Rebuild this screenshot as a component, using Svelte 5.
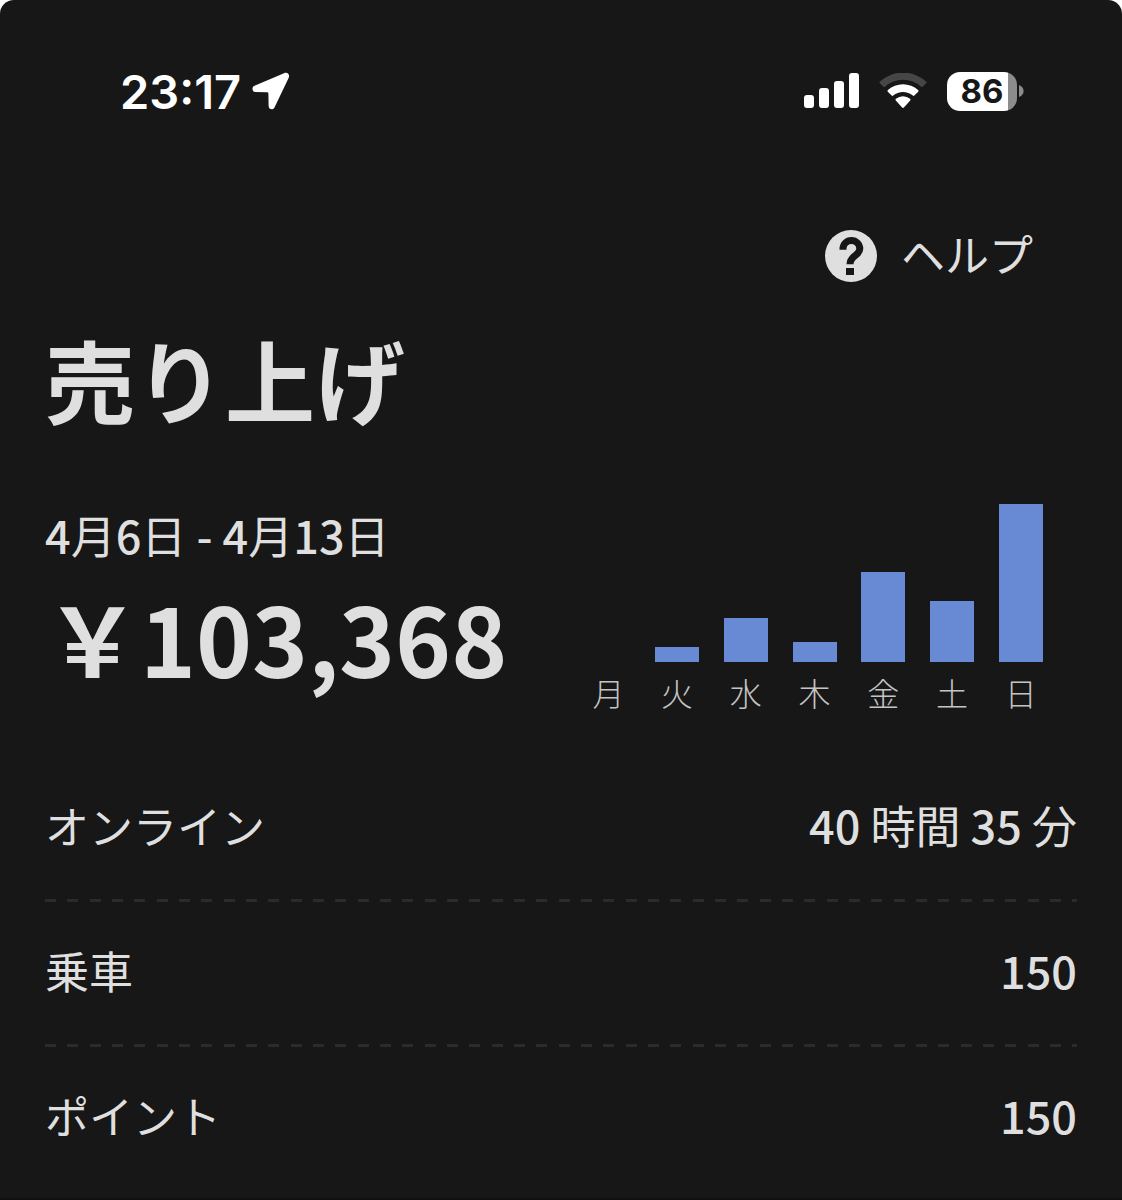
<script lang="ts">
  const days = [
    { label: '月', value: 0 },
    { label: '火', value: 15 },
    { label: '水', value: 44 },
    { label: '木', value: 20 },
    { label: '金', value: 90 },
    { label: '土', value: 61 },
    { label: '日', value: 158 }
  ];

  const stats = [
    { label: 'オンライン', value: '40 時間 35 分' },
    { label: '乗車', value: '150' },
    { label: 'ポイント', value: '150' }
  ];

  const period = '4月6日 - 4月13日';
  const max = Math.max(...days.map((d) => d.value));

  // digits are set heavier than the kanji around them
  function split(text: string): string[] {
    return text.split(/([\d-]+)/).filter(Boolean);
  }
</script>

{#snippet mixed(text: string)}
  {#each split(text) as part}<span class:num={/[\d-]/.test(part)}>{part}</span>{/each}
{/snippet}

<div class="screen">
  <header class="status-bar">
    <div class="clock">
      <span>23:17</span>
      <svg width="38" height="38" viewBox="0 0 38 38" aria-hidden="true">
        <path d="M32 1.2 2.5 13.8C-.6 15.2 0 20 3.2 20L15 20.2Q16.4 20.2 16.4 21.6L16.6 33.8C16.7 38 21.2 38.4 22.6 35.3L36.6 6C38.2 2.6 35.6-.4 32 1.2Z" fill="#fff" />
      </svg>
    </div>
    <div class="indicators">
      <svg width="55" height="36" viewBox="0 0 55 36" fill="#fff" aria-hidden="true">
        <rect x="0" y="22" width="10" height="13" rx="3" />
        <rect x="15" y="15" width="10" height="20" rx="3" />
        <rect x="30" y="8" width="10" height="27" rx="3" />
        <rect x="45" y="0" width="10" height="35" rx="3" />
      </svg>
      <svg width="48" height="36" viewBox="0 0 48 36" aria-hidden="true">
        <path d="M.8 10.2Q0 9.4.9 8.6A34 34 0 0 1 47.1 8.6Q48 9.4 47.2 10.2L43.6 13.7Q42.8 14.4 42 13.7A27 27 0 0 0 6 13.7Q5.2 14.4 4.4 13.7Z" fill="#464646" />
        <path d="M8.8 18.7Q8 17.9 8.9 17.1A22.5 22.5 0 0 1 39.1 17.1Q40 17.9 39.2 18.7L35.4 22.6Q34.6 23.3 33.8 22.6A15.2 15.2 0 0 0 14.2 22.6Q13.4 23.3 12.6 22.6Z" fill="#fff" />
        <path d="M16.8 27.4Q16 26.6 16.9 25.8A11.2 11.2 0 0 1 31.1 25.8Q32 26.6 31.2 27.4L24.9 34.5Q24 35.4 23.1 34.5Z" fill="#fff" />
      </svg>
      <div class="battery">
        <span class="level">86</span>
        <svg width="5" height="12" viewBox="0 0 5 12" aria-hidden="true">
          <path d="M0 0Q4.6 2 4.6 6T0 12Z" fill="#8c8c8c" />
        </svg>
      </div>
    </div>
  </header>

  <nav class="toolbar">
    <button type="button" class="help">
      <svg width="52" height="52" viewBox="0 0 52 52" aria-hidden="true">
        <circle cx="26" cy="26" r="26" fill="#dfdfdf" />
        <path d="M18 19.8V18.8A8.3 8.3 0 0 1 34.8 18.8C34.8 26 25 25.2 25 34.2" fill="none" stroke="#171717" stroke-width="7" />
        <rect x="21" y="38" width="8" height="7" fill="#171717" />
      </svg>
      <span>ヘルプ</span>
    </button>
  </nav>

  <main>
    <h1>売り上げ</h1>

    <section class="summary">
      <div class="total">
        <p class="period">{@render mixed(period)}</p>
        <p class="amount">￥103,368</p>
      </div>
      <div class="chart">
        {#each days as day}
          <div class="day">
            <div class="track">
              <div class="bar" style="height: {(day.value / max) * 100}%"></div>
            </div>
            <span>{day.label}</span>
          </div>
        {/each}
      </div>
    </section>

    <dl class="stats">
      {#each stats as stat}
        <div class="stat">
          <dt>{stat.label}</dt>
          <dd>{@render mixed(stat.value)}</dd>
        </div>
      {/each}
    </dl>
  </main>
</div>

<style>
  :global(body) {
    background: #fff;
  }

  .screen {
    box-sizing: border-box;
    min-height: 100vh;
    padding: 0 45px;
    border-bottom: 2px solid #110f10;
    border-radius: 14px 14px 0 0;
    background: #171717;
    color: #dfdfdf;
    font-family: 'Noto Sans CJK JP', sans-serif;
  }

  .status-bar {
    display: flex;
    align-items: center;
    justify-content: space-between;
    height: 182px;
    padding: 0 53px 0 75px;
    color: #fff;
    font-family: Inter, sans-serif;
  }

  .clock {
    display: flex;
    align-items: center;
    gap: 11px;
    font-size: 47px;
    font-weight: 600;
  }

  .indicators {
    display: flex;
    align-items: center;
    gap: 20px;
  }

  .battery {
    display: flex;
    align-items: center;
    gap: 2px;
  }

  .level {
    width: 70px;
    border-radius: 13px;
    background: linear-gradient(90deg, #fff 87%, #8c8c8c 87%);
    color: #171717;
    font-size: 33px;
    font-weight: 700;
    line-height: 39px;
    text-align: center;
  }

  .toolbar {
    display: flex;
    align-items: center;
    justify-content: flex-end;
    height: 148px;
    padding-right: 44px;
  }

  .help {
    display: flex;
    align-items: center;
    gap: 24px;
    padding: 0;
    border: none;
    background: none;
    color: inherit;
    font-family: inherit;
    font-size: 44px;
    line-height: 64px;
    cursor: pointer;
  }

  .help span {
    padding-bottom: 6px;
  }

  h1 {
    margin: 0;
    font-size: 90px;
    font-weight: 700;
    line-height: 96px;
  }

  .summary {
    display: grid;
    grid-template-columns: 11fr 10fr;
    padding: 78px 22px 43px 0;
  }

  .period {
    margin: 0;
    font-size: 45px;
    line-height: 62px;
  }

  .num {
    font-weight: 500;
  }

  .amount {
    margin: 0;
    font-size: 95px;
    font-weight: 700;
    line-height: 142px;
    white-space: nowrap;
  }

  .chart {
    display: grid;
    grid-template-columns: repeat(7, 1fr);
  }

  .day {
    display: flex;
    flex-direction: column;
    align-items: center;
    gap: 8px;
    color: #c4c4c4;
    font-size: 32px;
    font-weight: 300;
    line-height: 44px;
  }

  .track {
    display: flex;
    align-items: flex-end;
    width: 64%;
    height: 158px;
  }

  .bar {
    width: 100%;
    background: #688ad4;
  }

  .stats {
    margin: 0;
  }

  .stat {
    display: flex;
    align-items: center;
    justify-content: space-between;
    box-sizing: border-box;
    height: 145px;
    padding-bottom: 10px;
    font-size: 44px;
    line-height: 64px;
  }

  .stat:not(:last-child) {
    background: repeating-linear-gradient(
        90deg,
        #2b2b2b 0 11px,
        transparent 11px 22px,
        #2b2b2b 22px 33px,
        transparent 33px 45px,
        #2b2b2b 45px 56px,
        transparent 56px 67px
      )
      bottom / 100% 3px no-repeat;
  }

  dd {
    margin: 0;
    font-size: 45px;
  }
</style>
